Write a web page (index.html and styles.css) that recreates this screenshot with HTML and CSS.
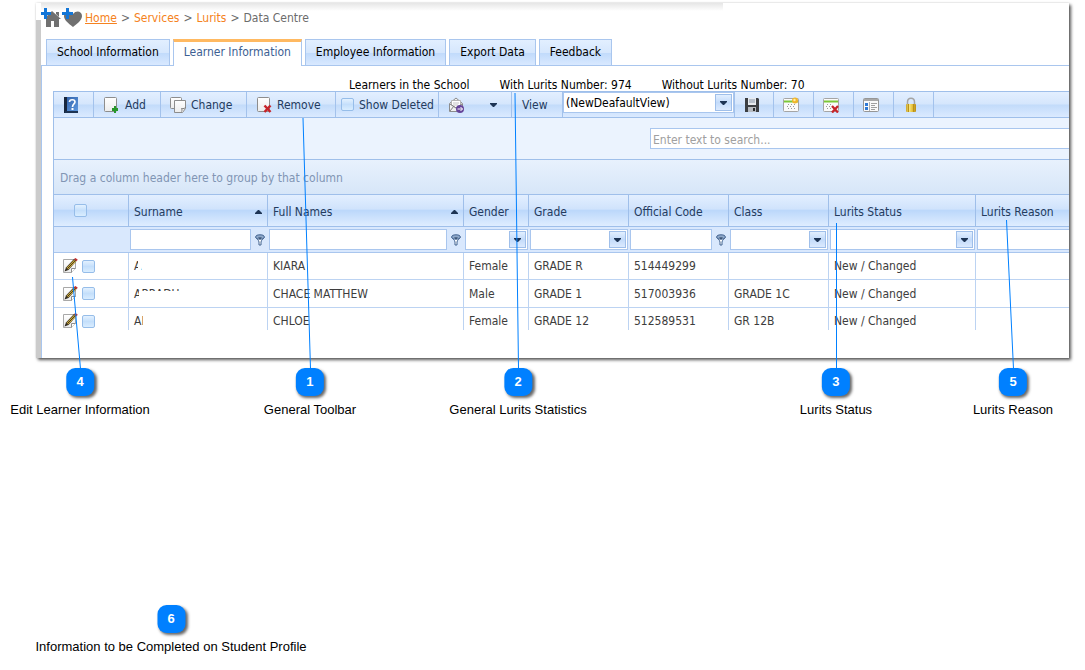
FILE: index.html
```html
<!DOCTYPE html>
<html lang="en">
<head>
<meta charset="utf-8">
<title>Data Centre</title>
<link rel="stylesheet" href="styles.css">
</head>
<body>
<svg class="defs" aria-hidden="true">
  <defs>
    <linearGradient id="gold" x1="0" x2="1"><stop offset="0" stop-color="#c9a52c"/><stop offset=".35" stop-color="#f9e478"/><stop offset=".7" stop-color="#e0b830"/><stop offset="1" stop-color="#b88c18"/></linearGradient>
    <linearGradient id="book" x1="0" x2="1" y1="0" y2="1"><stop offset="0" stop-color="#2f5fa8"/><stop offset="1" stop-color="#5f9ae0"/></linearGradient>
    <linearGradient id="paper" x1="0" x2="0" y1="0" y2="1"><stop offset="0" stop-color="#fff"/><stop offset="1" stop-color="#ececec"/></linearGradient>
    <symbol id="arrow" viewBox="0 0 7 4"><path d="M0 0h7v1L4 4H3L0 1z" fill="#1d3454"/></symbol>
    <symbol id="sort" viewBox="0 0 7 4"><path d="M0 4h7V3L4 0H3L0 3z" fill="#1d3454"/></symbol>
    <symbol id="funnel" viewBox="0 0 10 12"><path d="M1 3c0 2 3 3 3 5v3h2V8c0-2 3-3 3-5" fill="#fff" stroke="#41628f"/><ellipse cx="5" cy="3" rx="4.300" ry="2.200" fill="#8fa9cb" stroke="#41628f"/><path d="M3 3.500h4L5 5z" fill="#1d3454"/></symbol>
    <symbol id="edit" viewBox="0 0 16 16"><path d="M1.500 1.500h12v9l-4 4h-8z" fill="url(#paper)" stroke="#a8a8a8"/><path d="M9.500 14.500v-4h4" fill="#fff" stroke="#8e8e8e"/><path d="M2.500 13.500L4 9.500l8-8.500 2.500 2L6.500 12z" fill="#302a20"/><path d="M4.500 10L12 2l2 1.500L6 11.500z" fill="#e8c040"/><path d="M5.300 10.700l7.800-8" stroke="#302a20"/><path d="M12 1l1.500-1 2.300 1.800L14.500 3.300z" fill="#c22f2f"/></symbol>
  </defs>
</svg>

<main class="sheet">
  <section class="panel">
    <div class="content">
      <nav class="crumbs" aria-label="Breadcrumb">
        <svg width="20" height="22" viewBox="1 0 20 22" aria-hidden="true"><path d="M12 4l9 8h-2v8h-5v-6h-3v6H6v-8H4z" fill="#707070"/><path d="M16 5h3v5l-3-3z" fill="#707070"/><path d="M4 1h3v4h4v3H7v4H4V8H1V5h3z" fill="#1276d8"/></svg>
        <svg class="heart" width="20" height="22" viewBox="0 0 20 22" aria-hidden="true"><path d="M11 20C6 16 2 13 2 9c0-5 6-6 9-2 3-4 9-3 9 2 0 4-5 8-9 11z" fill="#707070"/><path d="M4 1h3v4h4v3H7v4H4V8H0V5h4z" fill="#1276d8"/></svg>
        <a class="home" href="#">Home</a><span>&gt;</span><a href="#">Services</a><span>&gt;</span><a href="#">Lurits</a><span>&gt;</span><span>Data Centre</span>
      </nav>
      <div class="tabs" role="tablist">
        <button class="tab" role="tab">School Information</button>
        <button class="tab active" role="tab" aria-selected="true">Learner Information</button>
        <button class="tab" role="tab">Employee Information</button>
        <button class="tab" role="tab">Export Data</button>
        <button class="tab" role="tab">Feedback</button>
      </div>
      <div class="page">
        <div class="stats"><span>Learners in the School</span><span>With Lurits Number: 974</span><span>Without Lurits Number: 70</span></div>
        <div class="grid">
          <div class="toolbar">
            <button class="tool help" aria-label="Help"><svg width="16" height="16" viewBox="0 0 16 16"><path d="M2 0h13v15H2z" fill="url(#book)"/><path d="M1 0h3v16H1z" fill="#17263d"/><path d="M2 14h13v2H2z" fill="#1d3353"/><path d="M6.500 5c0-3 5.500-3 5.500 0 0 2-2.500 2-2.500 5" fill="none" stroke="#fff" stroke-width="1.600"/><path d="M8.500 11h2v2h-2z" fill="#fff"/></svg></button>
            <button class="tool add"><svg width="16" height="16" viewBox="0 0 16 16"><rect x="1.500" y=".5" width="12" height="14" rx="1" fill="url(#paper)" stroke="#8d8d8d"/><path d="M11 9h2v2h2v3h-2v2h-2v-2H9v-3h2z" fill="#27962b"/></svg>Add</button>
            <button class="tool change"><svg width="16" height="16" viewBox="0 0 16 16"><rect x=".5" y=".5" width="11" height="11" rx="1" fill="url(#paper)" stroke="#8d8d8d"/><path d="M4.500 3.500h11v8l-3 4h-8z" fill="url(#paper)" stroke="#8d8d8d"/><path d="M11.500 14.500c1-1 0-3 0-3 2 1 4-1 4-1" fill="#fff" stroke="#777"/></svg>Change</button>
            <button class="tool remove"><svg width="16" height="16" viewBox="0 0 16 16"><rect x="1.500" y=".5" width="12" height="14" rx="1" fill="url(#paper)" stroke="#8d8d8d"/><path d="M8.500 8.500l6 6.500M14.500 8.500l-6 6.500" stroke="#c6242a" stroke-width="2.500"/></svg>Remove</button>
            <label class="tool deleted"><input class="check" type="checkbox">Show Deleted</label>
            <button class="tool mail" aria-label="Send mail"><svg width="16" height="16" viewBox="0 0 16 16"><path d="M1.500 6.500L8 1l6.500 5.500v8h-13z" fill="#f1f1f1" stroke="#8c8c8c"/><path d="M3.500 3.500h9v5L8 11 3.500 8z" fill="#fff" stroke="#b5b5b5"/><path d="M2 14l4-5M2 7l6 4 6-4" fill="none" stroke="#808080"/><path d="M5 6h6M5 8h5" stroke="#c4c4c4"/><circle cx="12" cy="12" r="4" fill="#66459a"/><path d="M9.500 12h5m-2-2l2 2-2 2" fill="none" stroke="#fff"/></svg><svg width="7" height="4"><use href="#arrow"/></svg></button>
            <label class="tool view" for="view">View</label>
            <span class="combo wide"><select id="view"><option>(NewDeafaultView)</option></select><span class="drop"><svg width="7" height="4"><use href="#arrow"/></svg></span></span>
            <button class="tool icon" aria-label="Save"><svg width="16" height="16" viewBox="0 0 16 16"><path d="M1 1h13l1 1v13H1z" fill="#3c3f43"/><path d="M4 1h8v7H4z" fill="#e8ebef"/><path d="M5 3h6M5 5h6" stroke="#8795a8"/><path d="M4 10h8v5H4z" fill="#b7bbc1"/><path d="M9 11h2v3H9z" fill="#27292c"/></svg></button>
            <button class="tool icon" aria-label="New view"><svg width="16" height="16" viewBox="0 0 16 16"><rect x=".5" y="1.500" width="15" height="13" rx="1" fill="#fafafa" stroke="#a5a5a5"/><path d="M1 4.500h14" stroke="#7cc838" stroke-width="2"/><path d="M5 7.500h7M4 9.500h7M5 11.500h7" stroke="#9a9a9a" stroke-dasharray="1 2"/><circle cx="12" cy="3.500" r="3" fill="#f1b62c"/><circle cx="11.500" cy="3" r="1.200" fill="#fff0a0"/></svg></button>
            <button class="tool icon" aria-label="Delete view"><svg width="16" height="16" viewBox="0 0 16 16"><rect x=".5" y="1.500" width="15" height="13" rx="1" fill="#fafafa" stroke="#a5a5a5"/><path d="M1 4.500h14" stroke="#7cc838" stroke-width="2"/><path d="M4 7.500h5M3 9.500h5M4 11.500h4" stroke="#9a9a9a" stroke-dasharray="1 2"/><path d="M9 9l6 6.500M15 9l-6 6.500" stroke="#c6242a" stroke-width="2.300"/></svg></button>
            <button class="tool icon" aria-label="Columns"><svg width="16" height="16" viewBox="0 0 16 16"><rect x=".5" y="1.500" width="15" height="13" rx="1" fill="#fafafa" stroke="#969696"/><path d="M1 3h14" stroke="#a8a8a8" stroke-width="2"/><path d="M2 6h3v3H2zM2 10h3v3H2z" fill="#2f79d4"/><path d="M6.500 5v9" stroke="#b0b0b0"/><path d="M8 6.500h6M8 8.500h4M8 10.500h6M8 12.500h4" stroke="#a0a0a0"/></svg></button>
            <button class="tool icon" aria-label="Lock"><svg width="16" height="16" viewBox="0 0 16 16"><path d="M4.500 8V5c0-5 7-5 7 0v3" fill="none" stroke="#a4a4a4" stroke-width="1.500"/><rect x="3" y="7" width="10" height="8" rx="1" fill="url(#gold)"/><path d="M5.500 7v8M10.500 7v8" stroke="#b8921c"/></svg></button>
          </div>
          <div class="searchbar"><input class="search" type="text" placeholder="Enter text to search..." aria-label="Search"></div>
          <div class="group">Drag a column header here to group by that column</div>
          <div class="scroll">
          <table class="learners">
            <colgroup><col class="c-sel"><col class="c-sur"><col class="c-full"><col class="c-gen"><col class="c-std"><col class="c-std"><col class="c-std"><col class="c-stat"><col></colgroup>
            <thead>
              <tr class="heads">
                <th class="pick"><input class="check" type="checkbox" aria-label="Select all"></th>
                <th><div class="th">Surname<svg width="7" height="4"><use href="#sort"/></svg></div></th>
                <th><div class="th">Full Names<svg width="7" height="4"><use href="#sort"/></svg></div></th>
                <th>Gender</th><th>Grade</th><th>Official Code</th><th>Class</th><th>Lurits Status</th><th>Lurits Reason</th>
              </tr>
              <tr class="filters">
                <td></td>
                <td><div class="filter"><input type="text" aria-label="Filter surname"><svg width="10" height="12"><use href="#funnel"/></svg></div></td>
                <td><div class="filter"><input type="text" aria-label="Filter full names"><svg width="10" height="12"><use href="#funnel"/></svg></div></td>
                <td><span class="combo"><select aria-label="Filter gender"><option></option></select><span class="drop"><svg width="7" height="4"><use href="#arrow"/></svg></span></span></td>
                <td><span class="combo"><select aria-label="Filter grade"><option></option></select><span class="drop"><svg width="7" height="4"><use href="#arrow"/></svg></span></span></td>
                <td><div class="filter"><input type="text" aria-label="Filter official code"><svg width="10" height="12"><use href="#funnel"/></svg></div></td>
                <td><span class="combo"><select aria-label="Filter class"><option></option></select><span class="drop"><svg width="7" height="4"><use href="#arrow"/></svg></span></span></td>
                <td><span class="combo"><select aria-label="Filter status"><option></option></select><span class="drop"><svg width="7" height="4"><use href="#arrow"/></svg></span></span></td>
                <td class="last"><div class="filter"><input type="text" aria-label="Filter reason"></div></td>
              </tr>
            </thead>
            <tbody>
              <tr><td><div class="row-tools"><button class="edit" aria-label="Edit"><svg width="16" height="16"><use href="#edit"/></svg></button><input class="check" type="checkbox" aria-label="Select learner"></div></td><td><span class="mask narrow">A</span></td><td>KIARA</td><td>Female</td><td>GRADE R</td><td>514449299</td><td></td><td>New / Changed</td><td></td></tr>
              <tr><td><div class="row-tools"><button class="edit" aria-label="Edit"><svg width="16" height="16"><use href="#edit"/></svg></button><input class="check" type="checkbox" aria-label="Select learner"></div></td><td><span class="mask tops">ABRADU</span></td><td>CHACE MATTHEW</td><td>Male</td><td>GRADE 1</td><td>517003936</td><td>GRADE 1C</td><td>New / Changed</td><td></td></tr>
              <tr><td><div class="row-tools"><button class="edit" aria-label="Edit"><svg width="16" height="16"><use href="#edit"/></svg></button><input class="check" type="checkbox" aria-label="Select learner"></div></td><td><span class="mask initial">AB</span></td><td>CHLOE</td><td>Female</td><td>GRADE 12</td><td>512589531</td><td>GR 12B</td><td>New / Changed</td><td></td></tr>
            </tbody>
          </table>
          </div>
        </div>
      </div>
    </div>
  </section>

  <svg class="leaders" aria-hidden="true"><path d="M72.500 277L80.500 369M303 118L310.500 369M515 93L518.500 369M836.500 223V369M1006.500 220L1013.500 369"/></svg>
  <div class="pin p4"><b>4</b><span>Edit Learner Information</span></div>
  <div class="pin p1"><b>1</b><span>General Toolbar</span></div>
  <div class="pin p2"><b>2</b><span>General Lurits Statistics</span></div>
  <div class="pin p3"><b>3</b><span>Lurits Status</span></div>
  <div class="pin p5"><b>5</b><span>Lurits Reason</span></div>
  <div class="pin p6"><b>6</b><span>Information to be Completed on Student Profile</span></div>
</main>
</body>
</html>
```

FILE: styles.css
```css
* { box-sizing: border-box; }
body { margin: 0; background: #fff; color: #000; font: 12px/16px "DejaVu Sans Condensed", "DejaVu Sans", sans-serif; }
button, input, select { font: inherit; color: inherit; margin: 0; padding: 0; border: 0; border-radius: 0; background: none; outline: 0; }
svg { display: block; flex: none; }
.defs { position: absolute; width: 0; height: 0; }

.sheet { position: relative; min-height: 100vh; padding: 3px 16px 0 36px; overflow: hidden; }
.panel { padding-left: 5px; background: linear-gradient(#fff 17px, #cbcbcb 17px); box-shadow: 2px 2px 3px rgba(0, 0, 0, .65), 0 0 2px rgba(0, 0, 0, .15); }
.content { background: #fff; }

.crumbs { display: flex; align-items: center; gap: 4px; height: 36px; padding-bottom: 6px; color: #6c6c6c; background: linear-gradient(#e6e6e6, #fff) 0 0 / 682px 8px no-repeat; }
.crumbs .heart { margin-right: -1px; margin-left: -3px; }
.crumbs a { color: #f58220; text-decoration: none; }
.crumbs .home { text-decoration: underline; }

.tabs { display: flex; gap: 3px; padding-left: 5px; border-bottom: 1px solid #a9c6ee; }
.tab { height: 26px; padding: 0 10px 2px; white-space: nowrap; border: 1px solid #a9c6ee; border-bottom: 0; background: linear-gradient(#e2efff, #d6e7fd 50%, #c0dafb 51%, #d9e9ff); }
.tab.active { height: 27px; margin-bottom: -1px; border-top: 3px solid #ffb961; background: #fff; color: #3d5f93; padding-bottom: 4px; }

.page { padding: 11px 0 28px 11px; border-left: 1px solid #a9c6ee; }
.stats { display: flex; gap: 30px; height: 14px; padding-left: 296px; white-space: nowrap; }
.grid { color: #243b5e; }
.scroll { max-height: 136px; overflow: hidden; }
.toolbar { display: flex; height: 27px; border: 1px solid #9fbfea; border-right: 0; white-space: nowrap; background: linear-gradient(#e3efff, #d5e6fc 48%, #c2dbfa 52%, #dbeaff); }
.tool { display: flex; align-items: center; gap: 6px; border-right: 1px solid #a3c2ec; }
.help { width: 40px; padding-left: 9px; }
.add { width: 67px; padding-left: 9px; }
.change { width: 86px; padding-left: 9px; gap: 5px; }
.remove { width: 89px; padding-left: 9px; gap: 5px; }
.deleted { width: 103px; padding-left: 5px; gap: 5px; }
.mail { width: 73px; padding-left: 9px; gap: 26px; }
.view { width: 51px; padding-left: 10px; }
.icon { width: 40px; padding-left: 9px; }
.check { appearance: none; width: 13px; height: 13px; flex: none; border: 1px solid #96bde9; border-radius: 2px; background: linear-gradient(#e3f1ff, #c4dffb 50%, #d9edff); }

.combo { display: flex; height: 21px; padding: 1px; border: 1px solid #a9c6ee; background: #fff; }
.combo select { appearance: none; flex: 1; min-width: 0; color: #000; }
.combo.wide { width: 171px; }
.combo.wide select { padding-left: 1px; }
.combo.wide + .tool { border-left: 1px solid #a3c2ec; }
.drop { display: flex; align-items: center; justify-content: center; width: 17px; flex: none; border: 1px solid #9fbfea; background: linear-gradient(#e2efff, #c3dbfa 50%, #dbeaff); pointer-events: none; }

.searchbar { display: flex; height: 42px; padding: 10px 0 10px 596px; border-left: 1px solid #9fbfea; border-bottom: 1px solid #9fbfea; background: #ebf3fe; }
.search { flex: 1; min-width: 0; padding: 2px 2px 0; border: 1px solid #a9c6ee; border-right: 0; background: #fff; }
.search::placeholder { color: #a0a0a0; opacity: 1; }
.group { height: 34px; padding: 10px 6px; color: #8195b4; border-left: 1px solid #9fbfea; background: linear-gradient(#e8f1fd, #d7e6f8); }

.learners { width: 100%; table-layout: fixed; border-collapse: separate; border-spacing: 0; border-left: 1px solid #9fbfea; }
.c-sel { width: 75px; }
.c-sur { width: 139px; }
.c-full { width: 196px; }
.c-gen { width: 65px; }
.c-std { width: 100px; }
.c-stat { width: 147px; }
.learners th, .learners td { padding: 0 5px; text-align: left; font-weight: 400; white-space: nowrap; border-right: 1px solid #bcd3f2; border-bottom: 1px solid #bcd3f2; }
.learners th:last-child, .learners td:last-child { border-right: 0; }
.learners .heads th { height: 33px; padding-top: 2px; border-top: 1px solid #9fbfea; border-color: #9fbfea; background: linear-gradient(#e3efff, #d0e3fc 45%, #bcd8fb 50%, #dfedff); }
.learners .heads .pick { padding: 0 22px 0 0; }
.pick .check { display: block; margin: 0 auto; }
.th { display: flex; align-items: center; justify-content: space-between; }
.filters { background: #d9e8fd; }
.learners .filters td { height: 26px; padding: 0 1px; border-right: 0; border-bottom-color: #a9c6ee; }
.filter { display: flex; align-items: center; gap: 4px; padding-right: 2px; }
.filter input { flex: 1; min-width: 0; height: 21px; border: 1px solid #a9c6ee; background: #fff; }
.last .filter { padding-right: 0; margin-right: -2px; }
.learners tbody td { height: 27px; color: #3d3d3d; }
.learners tbody tr:nth-child(2) td { height: 28px; }
.row-tools { display: flex; align-items: center; gap: 4px; padding-left: 3px; }

.mask { position: relative; display: inline-block; }
.mask::after { content: ""; position: absolute; inset: 0; left: 4px; background: #fff; }
.mask.tops::after { top: 5px; left: 5px; }
.mask.initial::after { left: 9px; }

.leaders { position: absolute; inset: 0; width: 100%; height: 100%; pointer-events: none; }
.leaders path { fill: none; stroke: #0080ff; stroke-width: 1; }
.pin { position: absolute; top: 368px; display: flex; flex-direction: column; align-items: center; gap: 6px; transform: translateX(-50%); font: 13px/16px "Liberation Sans", Arial, sans-serif; white-space: nowrap; }
.pin b { width: 28px; height: 28px; border-radius: 9px; background: #0080ff; color: #fff; line-height: 28px; text-align: center; box-shadow: 2px 2px 3px rgba(0, 0, 0, .6); }
.p4 { left: 80px; }
.p1 { left: 310px; }
.p2 { left: 518px; }
.p3 { left: 836px; }
.p5 { left: 1013px; }
.p6 { left: 171px; top: 605px; }
```
